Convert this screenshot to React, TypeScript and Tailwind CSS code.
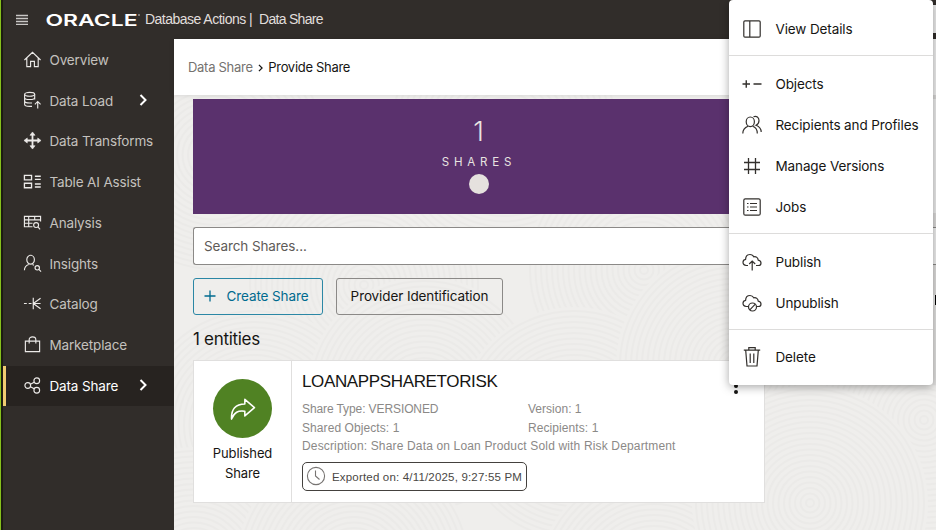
import React from "react";

const ui = "font-['Inter','Liberation_Sans',sans-serif]";
const helv = "font-['Liberation_Sans',Arial,sans-serif]";

type IconProps = { children: React.ReactNode; size?: number; className?: string; w?: number };

function Icon({ children, size = 20, className = "", w = 1.2 }: IconProps) {
  return (
    <svg
      width={size}
      height={size}
      viewBox="0 0 20 20"
      fill="none"
      stroke="currentColor"
      strokeWidth={w}
      className={`shrink-0 ${className}`}
    >
      {children}
    </svg>
  );
}

const cloud = "M6 13.5H4.3C2.3 13.3 1 11.900 1 10.300C1 8.700 2.200 7.500 3.600 7.300C3.700 4.500 5.500 2.500 8 2.500C9.700 2.500 11 3.400 11.800 4.800C14.200 4.300 16 5.800 16.200 8.100C17.900 8.400 19 9.500 19 10.900C19 12.400 17.900 13.500 16.300 13.500H14";

const navItems = [
  {
    label: "Overview",
    icon: <path d="M1.500 10.500L10 2.500L18.500 10.500M4 8.500V17.500H8V12H12V17.500H16V8.500" />,
  },
  {
    label: "Data Load",
    arrow: true,
    icon: (
      <>
        <ellipse cx="7" cy="3.500" rx="5.300" ry="2" />
        <path d="M1.700 3.500V14C1.700 15.200 4 16.200 7 16.200H9.500M12.300 3.500V9M1.700 7C1.700 8.200 4 9 7 9S12.300 8.200 12.300 7M1.700 10.500C1.700 11.700 4 12.600 7 12.600H9.500" />
        <path d="M15.500 18.500V11.500M12.500 14L15.500 11L18.500 14" />
      </>
    ),
  },
  {
    label: "Data Transforms",
    icon: (
      <>
        <path d="M10 3V17M3 10H17" strokeWidth="1.900" />
        <path d="M7.300 4.500L10 1L12.700 4.500ZM7.300 15.500L10 19L12.700 15.500ZM4.500 7.300L1 10L4.500 12.700ZM15.500 7.300L19 10L15.500 12.700Z" fill="currentColor" strokeWidth="0.600" />
      </>
    ),
  },
  {
    label: "Table AI Assist",
    icon: <path d="M1.500 3.500H9V8.300H1.500ZM1.500 11.800H9V16.600H1.500ZM12.500 4.500H18.700M12.500 7.700H18.700M12.500 12.600H18.700M12.500 15.800H18.700" strokeWidth="1.400" />,
  },
  {
    label: "Analysis",
    icon: (
      <>
        <path d="M10 14.500H1.500V3.500H18.500V9M1.500 7.200H18.500M1.500 10.800H10M6 3.500V14.500M12.300 3.500V7.200" />
        <circle cx="13.800" cy="12.700" r="2.600" />
        <path d="M15.700 14.600L18 17.200" />
      </>
    ),
  },
  {
    label: "Insights",
    icon: (
      <>
        <ellipse cx="8" cy="6" rx="4" ry="4.700" />
        <path d="M1.500 17C1.500 13.500 3.300 12 6 11" />
        <circle cx="15" cy="14.500" r="2.300" />
        <path d="M10 11L11.500 11.800M16.700 16.200L19 18.500" />
      </>
    ),
  },
  {
    label: "Catalog",
    icon: <path d="M1 10H4M6 10H9M10.800 4V16M18.500 4.500L10.800 10L18.500 15.500M10.800 10H18.500" />,
  },
  {
    label: "Marketplace",
    icon: <path d="M2.500 6.500H17.500V17.500H2.500ZM6.500 9V5C6.500 3.200 8 2 10 2S13.500 3.200 13.500 5V9" />,
  },
  {
    label: "Data Share",
    arrow: true,
    active: true,
    icon: (
      <>
        <circle cx="5" cy="10" r="3" />
        <circle cx="14.500" cy="5" r="3" />
        <circle cx="14.500" cy="15" r="3" />
        <path d="M7.800 8.700L11.800 6.500M7.800 11.300L11.800 13.500" />
      </>
    ),
  },
];

const menuGroups = [
  {
    pad: "pt-[8.500px] pb-[5.500px]",
    items: [
      {
        label: "View Details",
        icon: (
          <>
            <rect x="1.800" y="1.800" width="16.400" height="16.400" rx="1.200" />
            <path d="M7.800 2V18" />
          </>
        ),
      },
    ],
  },
  {
    pad: "border-t border-[#dddcdb] pt-[7.500px] pb-[5.600px]",
    items: [
      { label: "Objects", icon: <path d="M0.500 10H8M4.250 6.300V13.700M11.500 10H19.500" strokeWidth="1.400" /> },
      {
        label: "Recipients and Profiles",
        icon: (
          <>
            <ellipse cx="8.300" cy="6.800" rx="4.100" ry="4.800" />
            <path d="M0.800 18.500C0.800 14.500 3 12.500 6 11.300M10.600 11.300C13.700 12.300 15.300 14.500 15.300 18.500M11.500 1.700C14.500 0.500 17 2.500 17 5.500C17 7.800 15.700 9.600 14 10.200C17.500 11.500 19.200 13.500 19.200 17" />
          </>
        ),
      },
      { label: "Manage Versions", icon: <path d="M6.500 2V18M13.500 2V18M2 6.500H18M2 13.500H18" strokeWidth="1.300" /> },
      {
        label: "Jobs",
        icon: (
          <>
            <rect x="1.800" y="1.800" width="16.400" height="16.400" rx="1.500" />
            <path d="M5 6.500H6.500M5 10H6.500M5 13.500H6.500M8 6.500H15M8 10H15M8 13.500H15" />
          </>
        ),
      },
    ],
  },
  {
    pad: "border-t border-[#dddcdb] pt-[7.500px] pb-[5.600px]",
    items: [
      {
        label: "Publish",
        icon: (
          <>
            <path d={cloud} />
            <path d="M10.200 18.500V9.500M7.200 12L10.200 9L13.200 12" />
          </>
        ),
      },
      {
        label: "Unpublish",
        icon: (
          <>
            <path d={cloud} />
            <circle cx="10.500" cy="14" r="4" fill="white" />
            <path d="M7.800 16.800L13.300 11.200" />
          </>
        ),
      },
    ],
  },
  {
    pad: "border-t border-[#dddcdb] pt-[6.500px]",
    items: [
      {
        label: "Delete",
        icon: <path d="M1.800 3.200H18.200M6.800 3.200V0.700H13.200V3.200M3.700 3.200L5 19H15L16.300 3.200M8.200 6.500V16M11.800 6.500V16" />,
      },
    ],
  },
];

function Chevron({ className }: { className: string }) {
  return (
    <svg viewBox="0 0 8 12" fill="none" stroke="currentColor" className={className}>
      <path d="M1.500 1L6.500 6L1.500 11" strokeWidth="2" />
    </svg>
  );
}

const rippleCenters = [
  [40, 60], [190, 190], [330, 40], [470, 175], [80, 330], [250, 300],
  [400, 330], [560, 270], [710, 180], [750, 325], [20, 470], [180, 470], [480, 490], [636, 408],
];

function Ripples() {
  return (
    <svg className="absolute inset-0 h-full w-full" viewBox="0 0 762 435" preserveAspectRatio="none">
      {rippleCenters.map(([cx, cy], i) => (
        <g key={i} fill="none" stroke="#ebeae8" strokeWidth="2">
          <circle cx={cx} cy={cy} r="118" fill="#efeeec" stroke="none" />
          {Array.from({ length: 21 }, (_, n) => (
            <circle key={n} cx={cx} cy={cy} r={4 + n * 5.5} />
          ))}
        </g>
      ))}
    </svg>
  );
}

function Header() {
  return (
    <header className="flex h-[39px] shrink-0 items-center bg-[#312d2a] text-[#e0dedc]">
      <svg width="12" height="11" viewBox="0 0 12 11" className="ml-[13px] shrink-0" stroke="#c9c7c5" strokeWidth="1.300">
        <path d="M0 1.500H12M0 4.500H12M0 7.500H12M0 10.500H12" />
      </svg>
      <svg width="96" height="24" className="ml-[17px] shrink-0 overflow-visible" fill="#ffffff">
        <text x="0.500" y="17.500" fontSize="16" fontWeight="600" textLength="92" lengthAdjust="spacingAndGlyphs" fontFamily="Inter, sans-serif">
          ORACLE
        </text>
        <circle cx="94" cy="7" r="0.700" />
      </svg>
      <span className={`${helv} ml-[4px] w-[114px] shrink-0 whitespace-pre text-[14px] tracking-[-0.520px]`}>Database Actions |</span>
      <span className={`${helv} whitespace-pre text-[14px] tracking-[-0.700px]`}>Data Share</span>
    </header>
  );
}

function Sidebar() {
  return (
    <nav className="w-[171px] shrink-0 bg-[#312d2a] pt-[0.500px]">
      {navItems.map((item) => (
        <div
          key={item.label}
          className={`flex h-[40.750px] items-center border-l-[3px] pl-[17px] ${
            item.active ? "border-[#f0cc71] bg-[#272320] text-white" : "border-transparent text-[#c4c1be]"
          }`}
        >
          <Icon size={19} className="-mt-px text-[#eceae8]">{item.icon}</Icon>
          <span className={`${ui} ml-[7.500px] w-[86px] whitespace-nowrap text-[13.500px] tracking-[-0.150px]`}>{item.label}</span>
          {item.arrow && <Chevron className="-mt-px ml-[3.500px] h-[12px] w-[8px] shrink-0 text-white" />}
        </div>
      ))}
    </nav>
  );
}

function ShareCard() {
  return (
    <article className="flex h-[143px] w-[572px] border border-[#e0dfde] bg-white">
      <div className={`${ui} flex w-[98px] shrink-0 flex-col items-center border-r border-[#e0dfde] pt-[18px] text-center text-[13px] leading-[20.500px] tracking-[-0.100px] text-[#161513]`}>
        <div className="flex h-[59px] w-[59px] items-center justify-center rounded-full bg-[#508223] text-white">
          <svg width="26" height="22" viewBox="0 0 28 24" fill="none" stroke="currentColor" strokeWidth="1.700" strokeLinejoin="round">
            <path d="M1.500 23C1 12 6 6.500 16 6.500V1.500L26.500 10.500L16 19.500V14.500C8.500 13.500 4.500 15.500 1.500 23Z" />
          </svg>
        </div>
        <div className="mt-[4.500px]">Published<br />Share</div>
      </div>
      <div className={`${helv} flex flex-1 flex-col items-start pl-[10px] pt-[11px] text-[12px] leading-[18.700px] text-[#8b8987]`}>
        <h2 className="text-[17px] leading-[20px] tracking-[-0.360px] text-[#161513]">LOANAPPSHARETORISK</h2>
        <dl className="mt-[8px] grid grid-cols-[226px_1fr] tracking-[0.155px]">
          <div className="tracking-[-0.100px]">Share Type: VERSIONED</div>
          <div className="tracking-[0.020px]">Version: 1</div>
          <div className="tracking-[0.080px]">Shared Objects: 1</div>
          <div className="tracking-[0.080px]">Recipients: 1</div>
          <div className="col-span-2">Description: Share Data on Loan Product Sold with Risk Department</div>
        </dl>
        <div className="mt-[6px] flex h-[29px] w-[225px] shrink-0 items-center rounded-[5px] border border-[#44413e] pl-[3px] text-[#4a4744]">
          <Icon size={20} w={1.100} className="-mt-px text-[#777472]">
            <circle cx="10" cy="10" r="8.600" />
            <path d="M9.500 4.500V10L13.500 13.500" />
          </Icon>
          <span className="ml-[6px] mt-px whitespace-nowrap text-[11.500px] tracking-[0.180px]">Exported on: 4/11/2025, 9:27:55 PM</span>
        </div>
      </div>
      <div className="mt-[17px] mr-[26px] flex w-[4px] flex-col gap-[2px]">
        <i className="h-[4px] w-[4px] rounded-full bg-[#161513]" />
        <i className="h-[4px] w-[4px] rounded-full bg-[#161513]" />
        <i className="h-[4px] w-[4px] rounded-full bg-[#161513]" />
      </div>
    </article>
  );
}

function ContextMenu() {
  return (
    <div className={`${ui} absolute left-[729px] top-0 z-30 h-[385px] w-[204px] rounded-[4px] bg-white text-[13.500px] tracking-[-0.120px] text-[#161513] shadow-[0_2px_10px_rgba(0,0,0,0.350)]`}>
      {menuGroups.map((group, i) => (
        <div key={i} className={group.pad}>
          {group.items.map((item) => (
            <div key={item.label} className="flex h-[41px] items-center pl-[13px]">
              <Icon size={20} className="-mt-px text-[#33302d]">{item.icon}</Icon>
              <span className="ml-[13.500px] whitespace-nowrap">{item.label}</span>
            </div>
          ))}
        </div>
      ))}
    </div>
  );
}

function PageEdge() {
  return (
    <div className="absolute right-0 top-0 z-20 flex h-[385px] w-[3px] flex-col bg-[#ececec]">
      <i className="h-[5px] bg-[#312d2a]" />
      <i className="h-[28px] bg-[#ededed]" />
      <i className="h-[6px] bg-[#312d2a]" />
      <i className="h-[56px] bg-[#f0f0f0]" />
      <i className="h-[4px] bg-[#d8d7d6]" />
      <i className="h-[114px] bg-[#ededed]" />
      <i className="h-[14px] bg-[#dcdbda]" />
      <i className="h-[38px] border-y border-[#8b8987] bg-[#f0f0f0]" />
      <i className="h-[30px] bg-[#dfdedd]" />
      <i className="ml-[2px] h-[10px] bg-black" />
      <i className="flex-1 bg-[#e3e2e1]" />
    </div>
  );
}

export default function App() {
  return (
    <div className="relative flex h-[530px] w-[936px] overflow-hidden">
      <div className="w-[3px] shrink-0 border-l border-[#86c01c] bg-[#1b1d10]" />
      <div className="flex min-w-0 flex-1 flex-col">
        <Header />
        <div className="flex min-h-0 flex-1">
          <Sidebar />
          <main className={`${ui} flex min-w-0 flex-1 flex-col`}>
            <div className="z-10 flex h-[56px] shrink-0 items-center bg-white pl-[14px] text-[13px] shadow-[0_0_5px_rgba(0,0,0,0.120)]">
              <span className="mt-px tracking-[-0.280px] text-[#75726f]">Data Share</span>
              <Chevron className="ml-[5.500px] mr-[5px] mt-px h-[8px] w-[5px] text-[#161513]" />
              <span className="mt-px tracking-[-0.300px] text-[#161513]">Provide Share</span>
            </div>
            <div className="relative flex-1 bg-[#efeeec]">
              <Ripples />
              <div className="relative flex flex-col items-start pl-[19px] pt-[4px]">
                <section className="flex h-[115px] w-[571px] flex-col items-center bg-[#5a316d] pt-[16px] text-[#e8e4e1]">
                  <div className="text-[27px] leading-[33px] font-light">1</div>
                  <div className="mt-[6px] pl-px text-[11.500px] leading-[16px] tracking-[4.800px]">SHARES</div>
                  <div className="mt-[4px] h-[20px] w-[20px] rounded-full bg-[#e5e1de]" />
                </section>
                <div className="mt-[13px] flex h-[38px] w-full items-center rounded-l-[3px] border border-r-0 border-[#8b8987] bg-white pl-[10px] text-[13.500px] tracking-[-0.100px] text-[#5e5b58]">
                  Search Shares...
                </div>
                <div className="mt-[12.500px] flex gap-[13px] text-[13.500px] tracking-[-0.100px]">
                  <button className="flex h-[37.500px] w-[130px] items-center rounded-[3px] border border-[#2b87a5] pl-[10px] text-[#006b8f]">
                    <svg width="12" height="12" viewBox="0 0 12 12" stroke="currentColor" strokeWidth="1.300">
                      <path d="M6 0.500V11.500M0.500 6H11.500" />
                    </svg>
                    <span className="ml-[10.500px] whitespace-nowrap">Create Share</span>
                  </button>
                  <button className="h-[37.500px] w-[167px] whitespace-nowrap rounded-[3px] border border-[#8b8987] text-[#161513]">
                    Provider Identification
                  </button>
                </div>
                <h1 className="mt-[14px] text-[17px] leading-[20px] tracking-[-0.300px] text-[#161513]">1 entities</h1>
                <div className="mt-[11px]">
                  <ShareCard />
                </div>
              </div>
            </div>
          </main>
        </div>
      </div>
      <PageEdge />
      <ContextMenu />
    </div>
  );
}
